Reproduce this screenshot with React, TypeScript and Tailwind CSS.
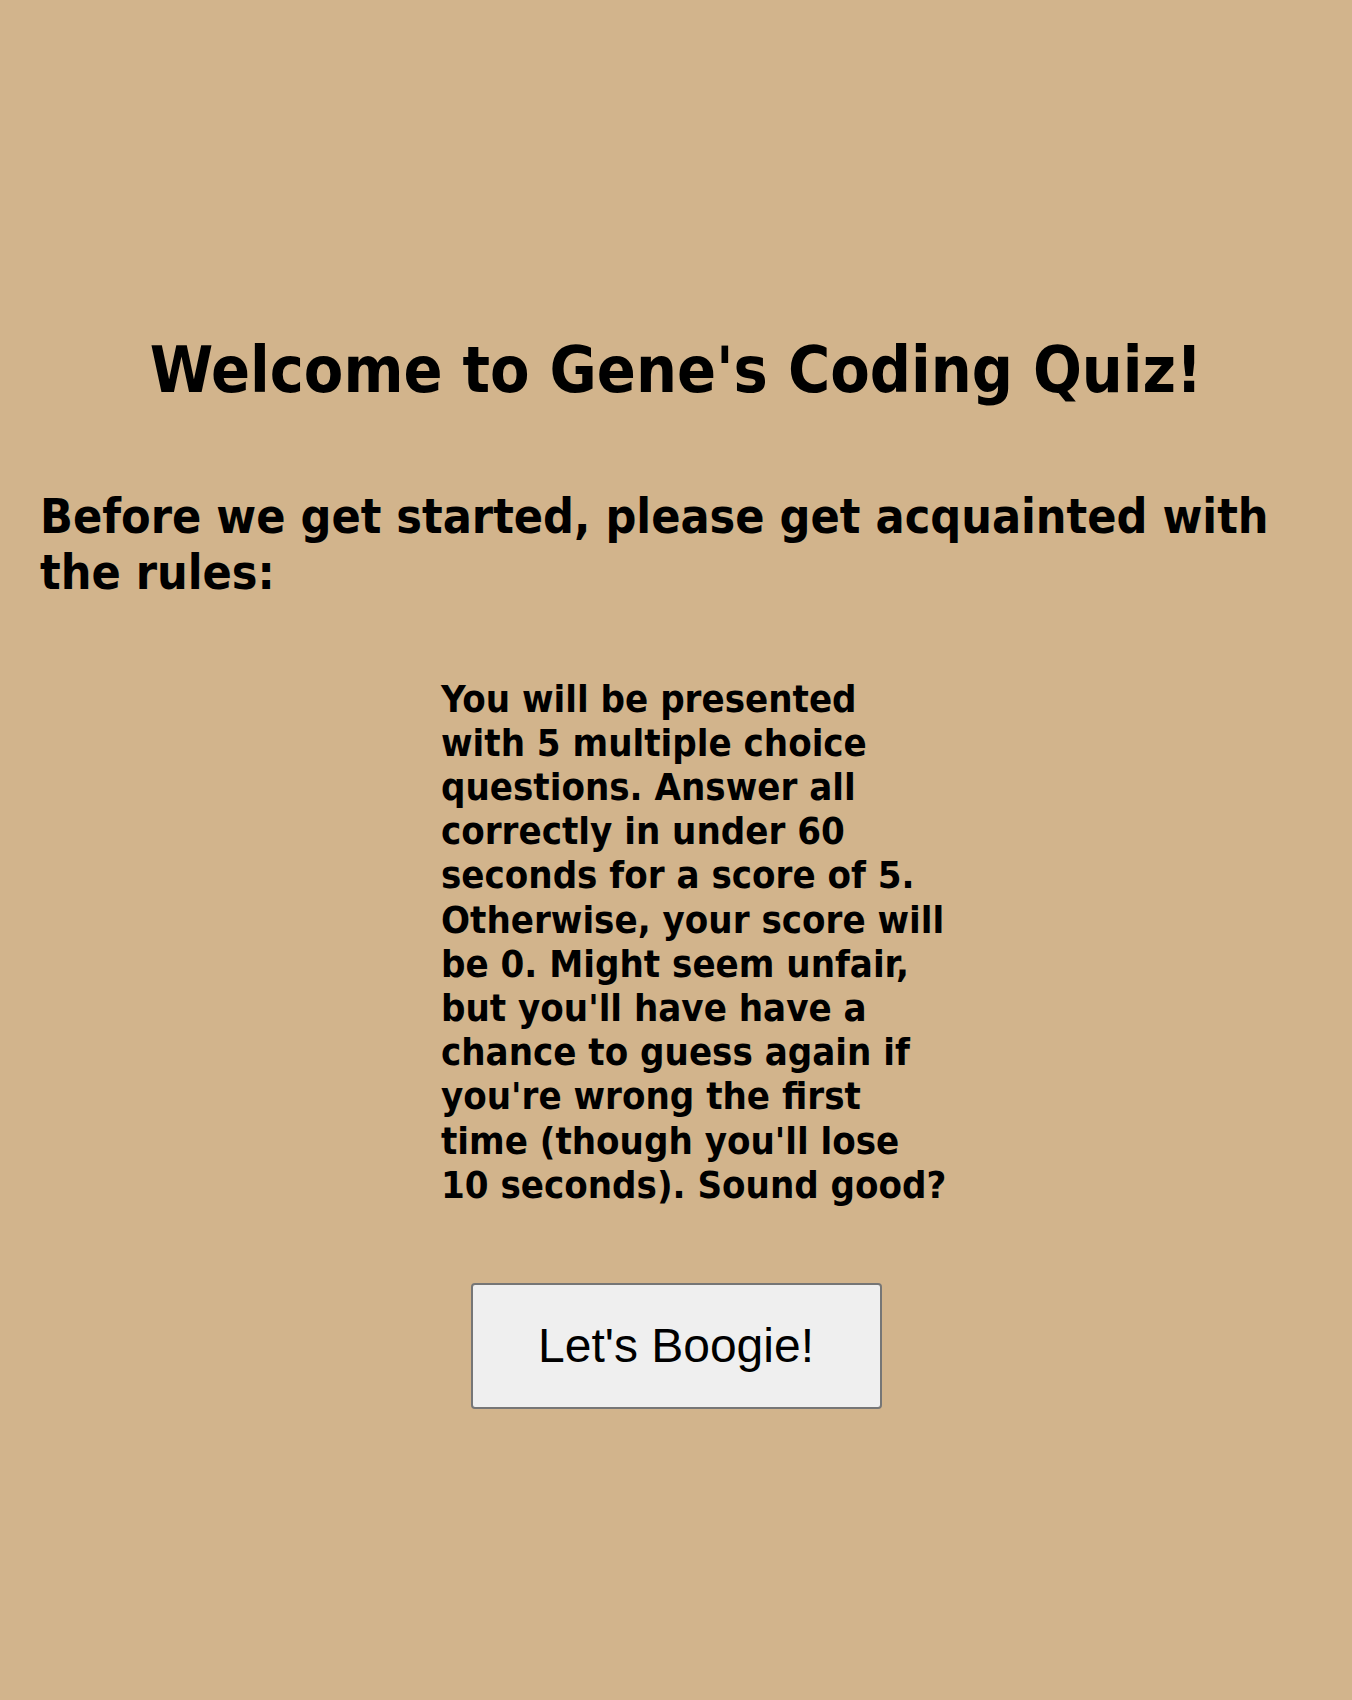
import React from "react";

export default function App() {
  return (
    <div
      className="min-h-[1700px] w-full bg-[#d2b48c] text-black"
      style={{ fontFamily: '"DejaVu Sans Condensed", "DejaVu Sans", Verdana, sans-serif' }}
    >
      <div className="flex flex-col pt-[333px] font-stretch-condensed">
        <h1 className="text-center text-[64px] font-bold leading-[74.5px]">
          Welcome to Gene's Coding Quiz!
        </h1>
        <h2 className="mt-[80px] pl-[40px] pr-[40px] text-[48px] font-bold leading-[56px]">
          Before we get started, please get acquainted with the rules:
        </h2>
        <p className="ml-[441px] mt-[77px] w-[506px] text-[38px] font-bold leading-[44.2px]">
          You will be presented with 5 multiple choice questions. Answer all
          correctly in under 60 seconds for a score of 5. Otherwise, your score
          will be 0. Might seem unfair, but you'll have have a chance to guess
          again if you're wrong the first time (though you'll lose 10 seconds).
          Sound good?
        </p>
        <div className="mt-[76px] flex justify-center">
          <button
            className="h-[126px] w-[411px] rounded-[4px] border-2 border-[#767676] bg-[#efefef] text-[48px] text-black"
            style={{ fontFamily: '"Liberation Sans", Arial, sans-serif' }}
          >
            Let's Boogie!
          </button>
        </div>
      </div>
    </div>
  );
}
